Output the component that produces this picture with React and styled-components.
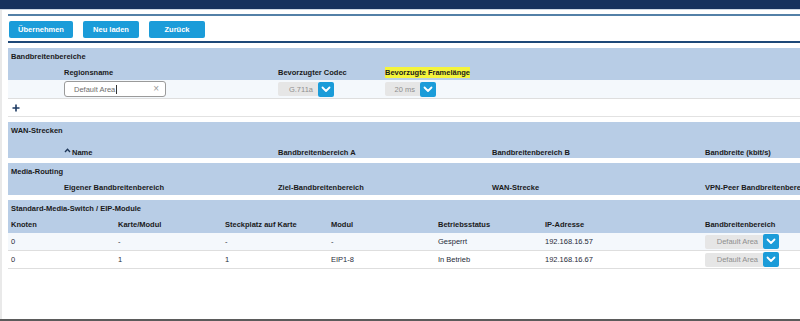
import React from 'react'
import styled, { createGlobalStyle } from 'styled-components'

const GlobalStyle = createGlobalStyle`
  html, body {
    margin: 0;
    padding: 0;
    background: #ffffff;
  }
  body {
    font-family: "Liberation Sans", Arial, sans-serif;
    font-size: 7.5px;
    color: #1e1e1e;
  }
`

const Page = styled.div`
  width: 800px;
  height: 321px;
  display: flex;
  flex-direction: column;
  overflow: hidden;
`

const NavBar = styled.div`
  height: 9px;
  flex: none;
  background: #17325d;
  border-bottom: 1px solid #cdd7e3;
`

const Middle = styled.div`
  flex: 1;
  display: flex;
  min-height: 0;
`

const Gutter = styled.div`
  width: 2px;
  flex: none;
  background: #e9e9e9;
`

const Main = styled.div`
  flex: 1;
  margin-left: 6px;
  display: flex;
  flex-direction: column;
  overflow: hidden;
`

const BottomBar = styled.div`
  height: 2px;
  flex: none;
  background: #5b5b5b;
`

const Rule = styled.div`
  height: 2px;
  flex: none;
  margin-top: ${p => p.$top}px;
  background: ${p => p.$color};
`

const Toolbar = styled.div`
  display: flex;
  gap: 10px;
  margin-top: 5px;
  padding-left: 1px;
`

const Button = styled.button`
  height: 17px;
  width: ${p => p.$w}px;
  margin-right: ${p => p.$mr || 0}px;
  border: none;
  border-radius: 2px;
  background: #1b9cd9;
  color: #ffffff;
  font-family: "Liberation Sans", Arial, sans-serif;
  font-size: 7.5px;
  font-weight: bold;
  padding: 0;
  cursor: pointer;
`

const Section = styled.div`
  margin-top: ${p => p.$top}px;
  flex: none;
`

const SectionHead = styled.div`
  background: #b8cde6;
`

const Title = styled.div`
  height: 16px;
  display: flex;
  align-items: center;
  padding-left: 3px;
  font-weight: bold;
  color: #1a1a1a;
`

const Cols = styled.div`
  display: grid;
  grid-template-columns: ${p => p.$cols};
  padding-left: 3px;
  height: ${p => p.$h}px;
  align-items: ${p => p.$align || 'center'};
  padding-bottom: ${p => p.$pb || 0}px;
  box-sizing: border-box;
  white-space: nowrap;
`

const HeadCell = styled.div`
  font-weight: bold;
  color: #1a1a1a;
  display: flex;
  align-items: center;
  gap: 1px;
`

const Marked = styled.span`
  background: #f4f43c;
  padding: 1px 0;
`

const DataRow = styled(Cols)`
  background: ${p => (p.$shade ? '#f4f8fc' : '#ffffff')};
  border-bottom: 1px solid #dedede;
  box-sizing: content-box;
`

const Cell = styled.div`
  color: #1f2b3a;
`

const TextInput = styled.div`
  width: 102px;
  height: 16px;
  box-sizing: border-box;
  border: 1px solid #9a9a9a;
  border-radius: 3px;
  display: flex;
  align-items: center;
  padding: 0 6px 0 9px;
  color: #6e6e6e;
  background: #ffffff;
`

const Caret = styled.span`
  width: 1px;
  height: 9px;
  background: #333;
  margin-left: 1px;
`

const Clear = styled.span`
  margin-left: auto;
  color: #9a9a9a;
  font-size: 10px;
  line-height: 1;
`

const Select = styled.div`
  display: flex;
  align-items: center;
`

const SelectValue = styled.div`
  width: ${p => p.$w}px;
  height: 14px;
  box-sizing: border-box;
  background: #e6e6e6;
  border-radius: 2px 0 0 2px;
  color: #8f8f8f;
  display: flex;
  align-items: center;
  justify-content: flex-end;
  padding-right: 5px;
`

const SelectButton = styled.div`
  width: 16px;
  height: 15px;
  background: #1b9cd9;
  border-radius: 2px;
  display: flex;
  align-items: center;
  justify-content: center;
`

const PlusRow = styled.div`
  height: 17px;
  border-bottom: 1px solid #e2e2e2;
  display: flex;
  align-items: center;
  padding-left: 4px;
`

const Chevron = () => (
  <svg width="10" height="7" viewBox="0 0 10 7">
    <path d="M1.5 1.5 L5 5 L8.5 1.5" fill="none" stroke="#ffffff" strokeWidth="1.8" strokeLinecap="round" strokeLinejoin="round" />
  </svg>
)

const SortUp = () => (
  <svg width="7" height="5" viewBox="0 0 7 5" style={{ marginBottom: 4 }}>
    <path d="M1 4 L3.5 1.3 L6 4" fill="none" stroke="#1d3557" strokeWidth="1.4" />
  </svg>
)

const Plus = () => (
  <svg width="8" height="8" viewBox="0 0 8 8">
    <path d="M4 0.5 V7.5 M0.5 4 H7.5" stroke="#1d3a63" strokeWidth="1.6" />
  </svg>
)

function Dropdown({ value, w }) {
  return (
    <Select>
      <SelectValue $w={w}>{value}</SelectValue>
      <SelectButton><Chevron /></SelectButton>
    </Select>
  )
}

const COLS_REGION = '53px 214px 107px auto'
const COLS_FOUR = '53px 214px 214px 213px auto'
const COLS_SWITCH = '107px 107px 106px 107px 107px 160px auto'

const modules = [
  { node: '0', card: '-', slot: '-', mod: '-', status: 'Gesperrt', ip: '192.168.16.57' },
  { node: '0', card: '1', slot: '1', mod: 'EIP1-8', status: 'In Betrieb', ip: '192.168.16.67' },
]

export default function App() {
  return (
    <Page>
      <GlobalStyle />
      <NavBar />
      <Middle>
        <Gutter />
        <Main>
          <Rule $top={4} $color="#5380a7" />
          <Toolbar>
            <Button $w={64}>Übernehmen</Button>
            <Button $w={56}>Neu laden</Button>
            <Button $w={56}>Zurück</Button>
          </Toolbar>
          <Rule $top={3} $color="#1e4878" />

          <Section $top={5}>
            <SectionHead>
              <Title>Bandbreitenbereiche</Title>
              <Cols $cols={COLS_REGION} $h={16}>
                <span />
                <HeadCell>Regionsname</HeadCell>
                <HeadCell>Bevorzugter Codec</HeadCell>
                <HeadCell><Marked>Bevorzugte Framelänge</Marked></HeadCell>
              </Cols>
            </SectionHead>
            <DataRow $cols={COLS_REGION} $h={18} $shade>
              <span />
              <TextInput>
                Default Area<Caret />
                <Clear>×</Clear>
              </TextInput>
              <Dropdown value="G.711a" w={40} />
              <Dropdown value="20 ms" w={35} />
            </DataRow>
            <PlusRow><Plus /></PlusRow>
          </Section>

          <Section $top={5}>
            <SectionHead>
              <Title>WAN-Strecken</Title>
              <Cols $cols={COLS_FOUR} $h={20} $align="end" $pb={1}>
                <span />
                <HeadCell><SortUp />Name</HeadCell>
                <HeadCell>Bandbreitenbereich A</HeadCell>
                <HeadCell>Bandbreitenbereich B</HeadCell>
                <HeadCell>Bandbreite (kbit/s)</HeadCell>
              </Cols>
            </SectionHead>
          </Section>

          <Section $top={5}>
            <SectionHead>
              <Title>Media-Routing</Title>
              <Cols $cols={COLS_FOUR} $h={16}>
                <span />
                <HeadCell>Eigener Bandbreitenbereich</HeadCell>
                <HeadCell>Ziel-Bandbreitenbereich</HeadCell>
                <HeadCell>WAN-Strecke</HeadCell>
                <HeadCell>VPN-Peer Bandbreitenbereich</HeadCell>
              </Cols>
            </SectionHead>
          </Section>

          <Section $top={5}>
            <SectionHead>
              <Title>Standard-Media-Switch / EIP-Module</Title>
              <Cols $cols={COLS_SWITCH} $h={17}>
                <HeadCell>Knoten</HeadCell>
                <HeadCell>Karte/Modul</HeadCell>
                <HeadCell>Steckplatz auf Karte</HeadCell>
                <HeadCell>Modul</HeadCell>
                <HeadCell>Betriebsstatus</HeadCell>
                <HeadCell>IP-Adresse</HeadCell>
                <HeadCell>Bandbreitenbereich</HeadCell>
              </Cols>
            </SectionHead>
            {modules.map((m, i) => (
              <DataRow key={i} $cols={COLS_SWITCH} $h={17} $shade={i === 0}>
                <Cell>{m.node}</Cell>
                <Cell>{m.card}</Cell>
                <Cell>{m.slot}</Cell>
                <Cell>{m.mod}</Cell>
                <Cell>{m.status}</Cell>
                <Cell>{m.ip}</Cell>
                <Dropdown value="Default Area" w={58} />
              </DataRow>
            ))}
          </Section>
        </Main>
      </Middle>
      <BottomBar />
    </Page>
  )
}
